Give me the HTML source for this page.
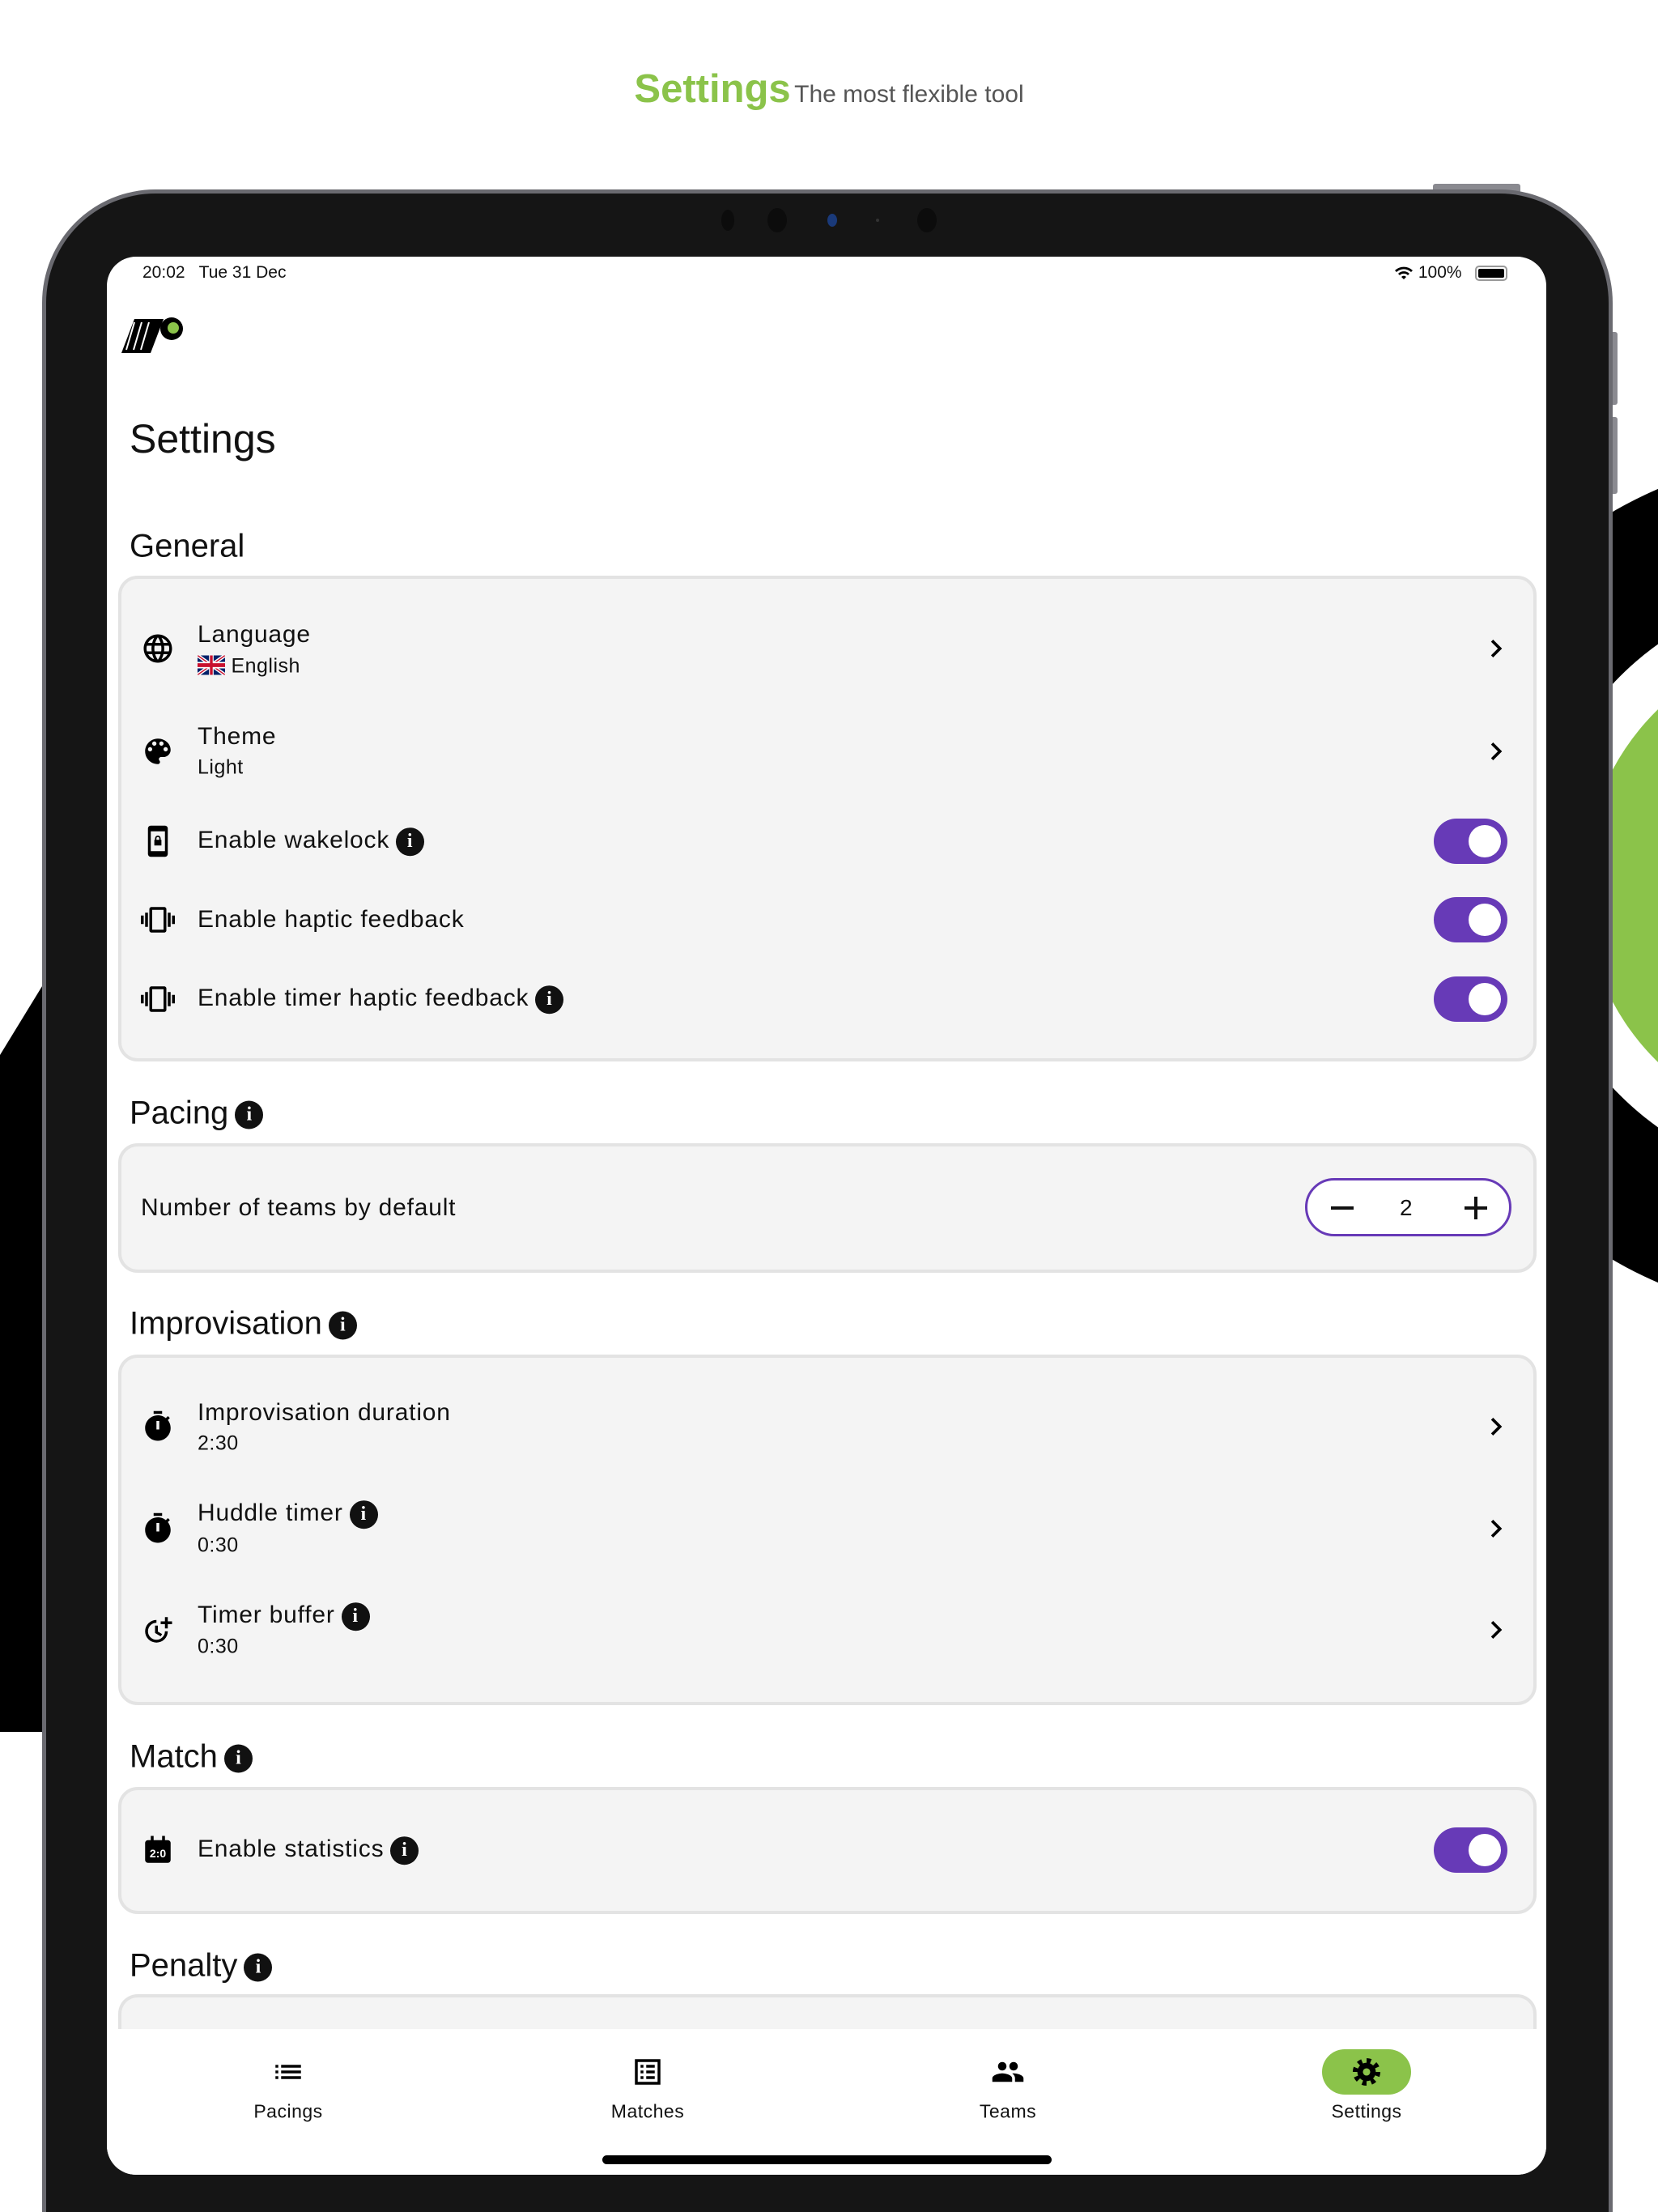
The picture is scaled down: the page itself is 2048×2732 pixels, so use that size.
<!DOCTYPE html>
<html style="overflow:hidden;width:2048px;height:2732px"><head><meta charset="utf-8"><style>
*{margin:0;padding:0;box-sizing:border-box}
body{width:2048px;height:2732px;overflow:hidden;background:#fff;font-family:"Liberation Sans",sans-serif;color:#111}
#w{position:relative;width:2048px;height:2732px;overflow:hidden}
.a{position:absolute}
.t{position:absolute;white-space:nowrap;transform:translateY(-50%)}
.card{position:absolute;left:146px;width:1752px;background:#f4f4f4;border:4px solid #e3e3e3;border-radius:24px}
.h{font-size:40px;left:160px;color:#111}
.rt{font-size:30px;left:244px;letter-spacing:0.8px}
.rs{font-size:25px;left:244px;letter-spacing:0.5px}
.ic{position:absolute;width:42px;height:42px;left:174px;transform:translateY(-50%)}
.chev{position:absolute;left:1826px;width:44px;height:44px;transform:translateY(-50%)}
.tog{position:absolute;left:1771px;width:91px;height:56px;border-radius:28px;background:#673ab7;transform:translateY(-50%)}
.tog::after{content:"";position:absolute;right:8px;top:8px;width:40px;height:40px;border-radius:50%;background:#fff}
.info{display:inline-block;width:35px;height:35px;border-radius:50%;background:#111;color:#fff;font-weight:bold;font-size:24px;line-height:35px;text-align:center;vertical-align:middle;margin-left:8px;font-family:"Liberation Serif",serif}
.nl{position:absolute;top:2608px;font-size:23px;transform:translate(-50%,-50%);letter-spacing:0.5px}
.ni{position:absolute;top:2559px;width:42px;height:42px;transform:translate(-50%,-50%)}
</style></head><body><div id="w">

<svg class="a" style="left:0;top:0" width="2048" height="2732">
<polygon points="0,1303 60,1205 60,2139 0,2139" fill="#000"/>
<circle cx="2260" cy="1094" r="534" fill="#000"/>
<circle cx="2260" cy="1094" r="366" fill="#fff"/>
<circle cx="2260" cy="1094" r="304" fill="#8bc34a"/>
</svg>

<div class="t" style="left:0;width:2048px;text-align:center;top:110px"><span style="color:#8bc34a;font-weight:bold;font-size:49px">Settings</span> <span style="color:#555;font-size:30px">The most flexible tool</span></div>

<div class="a" style="left:1770px;top:227px;width:108px;height:12px;background:#8a8a90;border-radius:3px"></div>
<div class="a" style="left:1988px;top:410px;width:10px;height:90px;background:#8a8a90;border-radius:3px"></div>
<div class="a" style="left:1988px;top:515px;width:10px;height:95px;background:#8a8a90;border-radius:3px"></div>
<div class="a" style="left:52px;top:234px;width:1940px;height:2498px;background:#151515;border:5px solid #6a6a70;border-bottom:none;border-radius:140px 140px 0 0"></div>
<div class="a" style="left:891px;top:259px;width:16px;height:26px;border-radius:50%;background:#0c0c0c"></div>
<div class="a" style="left:948px;top:257px;width:24px;height:30px;border-radius:50%;background:#0c0c0c"></div>
<div class="a" style="left:1022px;top:264px;width:12px;height:16px;border-radius:50%;background:#1a3a7a"></div>
<div class="a" style="left:1082px;top:270px;width:4px;height:4px;border-radius:50%;background:#333"></div>
<div class="a" style="left:1133px;top:257px;width:24px;height:30px;border-radius:50%;background:#0c0c0c"></div>

<div class="a" style="left:132px;top:317px;width:1778px;height:2369px;background:#fff;border-radius:36px"></div>

<div class="t" style="left:176px;top:337px;font-size:21px">20:02&nbsp;&nbsp; Tue 31 Dec</div>
<div class="t" style="left:1722px;top:337px;font-size:21px">
<svg width="24" height="20" viewBox="0 0 24 20" style="vertical-align:middle"><path d="M12 18l3-3a4 4 0 0 0-6 0zM5 11a10 10 0 0 1 14 0l-2 2a7 7 0 0 0-10 0zM1 7a16 16 0 0 1 22 0l-2 2a13 13 0 0 0-18 0z" fill="#000"/></svg> 100%</div>
<div class="a" style="left:1822px;top:328px;width:40px;height:19px;border:2px solid #999;border-radius:5px;padding:2px"><div style="width:100%;height:100%;background:#000;border-radius:2px"></div></div>

<svg class="a" style="left:148px;top:390px" width="82" height="50" viewBox="0 0 82 50">
<polygon points="18,4 54,4 38,46 2,46" fill="#000"/>
<line x1="18" y1="8" x2="8" y2="42" stroke="#fff" stroke-width="2"/>
<line x1="27" y1="8" x2="17" y2="42" stroke="#fff" stroke-width="2"/>
<line x1="36" y1="8" x2="26" y2="42" stroke="#fff" stroke-width="2"/>
<circle cx="64" cy="16" r="14" fill="#000"/><circle cx="66" cy="15" r="7" fill="#8bc34a"/>
</svg>

<div class="t" style="left:160px;top:542px;font-size:50px">Settings</div>

<div class="t h" style="top:675px">General</div>
<div class="card" style="top:711px;height:600px"></div>

<svg class="ic" style="top:801px" viewBox="0 0 24 24"><path d="M11.99 2C6.47 2 2 6.48 2 12s4.47 10 9.99 10C17.52 22 22 17.52 22 12S17.52 2 11.99 2zm6.93 6h-2.95c-.32-1.25-.78-2.45-1.38-3.56 1.84.63 3.37 1.91 4.330 3.56zM12 4.04c.83 1.2 1.48 2.53 1.91 3.96h-3.82c.43-1.43 1.08-2.76 1.91-3.96zM4.26 14C4.1 13.36 4 12.69 4 12s.1-1.36.26-2h3.38c-.08.66-.14 1.320-.14 2s.06 1.34.14 2H4.26zm.82 2h2.95c.32 1.25.78 2.45 1.38 3.56-1.84-.63-3.37-1.9-4.33-3.56zm2.95-8H5.08c.96-1.66 2.49-2.93 4.330-3.56C8.81 5.55 8.35 6.75 8.03 8zM12 19.96c-.83-1.2-1.48-2.53-1.91-3.96h3.82c-.43 1.43-1.08 2.76-1.91 3.96zM14.34 14H9.66c-.09-.66-.16-1.32-.16-2s.07-1.35.16-2h4.68c.09.65.16 1.32.16 2s-.07 1.340-.16 2zm.25 5.56c.6-1.11 1.06-2.31 1.38-3.56h2.950c-.96 1.65-2.49 2.93-4.33 3.56zM16.36 14c.08-.66.14-1.32.14-2s-.06-1.34-.14-2h3.38c.16.64.26 1.31.26 2s-.1 1.36-.26 2h-3.38z"/></svg>
<div class="t rt" style="top:784px">Language</div>
<div class="t rs" style="top:823px"><svg width="34" height="24" viewBox="0 0 60 30" style="vertical-align:-3px" preserveAspectRatio="none"><rect width="60" height="30" fill="#012169"/><path d="M0 0L60 30M60 0L0 30" stroke="#fff" stroke-width="6"/><path d="M0 0L60 30M60 0L0 30" stroke="#c8102e" stroke-width="2"/><path d="M30 0v30M0 15h60" stroke="#fff" stroke-width="10"/><path d="M30 0v30M0 15h60" stroke="#c8102e" stroke-width="6"/></svg> English</div>
<svg class="chev" style="top:801px" viewBox="0 0 24 24"><path d="M8.6 16.6L13.2 12 8.6 7.4 10 6l6 6-6 6z"/></svg>

<svg class="ic" style="top:928px" viewBox="0 0 24 24"><path fill-rule="evenodd" d="M12 3c-4.97 0-9 4.03-9 9s4.03 9 9 9c.83 0 1.5-.67 1.5-1.5 0-.39-.15-.74-.39-1.01-.23-.26-.38-.61-.38-.99 0-.83.67-1.5 1.5-1.5H16c2.76 0 5-2.24 5-5 0-4.42-4.03-8-9-8zm-5.5 9c-.83 0-1.5-.67-1.5-1.5S5.67 9 6.5 9 8 9.67 8 10.5 7.33 12 6.5 12zm3-4C8.67 8 8 7.33 8 6.5S8.67 5 9.5 5s1.5.67 1.5 1.5S10.33 8 9.5 8zm5 0c-.83 0-1.5-.67-1.5-1.5S13.67 5 14.5 5s1.5.67 1.5 1.5S15.33 8 14.5 8zm3 4c-.83 0-1.5-.67-1.5-1.5S16.67 9 17.5 9s1.5.67 1.5 1.5-.67 1.5-1.5 1.5z"/></svg>
<div class="t rt" style="top:910px">Theme</div>
<div class="t rs" style="top:948px">Light</div>
<svg class="chev" style="top:928px" viewBox="0 0 24 24"><path d="M8.6 16.6L13.2 12 8.6 7.4 10 6l6 6-6 6z"/></svg>

<svg class="ic" style="top:1039px" viewBox="0 0 24 24"><path fill-rule="evenodd" d="M7 1h10a2 2 0 0 1 2 2v18a2 2 0 0 1-2 2H7a2 2 0 0 1-2-2V3a2 2 0 0 1 2-2zM7 5v14h10V5z"/><path d="M10 11v-1a2 2 0 0 1 4 0v1h.5v4h-5v-4zm1 0h2v-1a1 1 0 0 0-2 0z"/></svg>
<div class="t rt" style="top:1039px">Enable wakelock<span class="info">i</span></div>
<div class="tog" style="top:1039px"></div>

<svg class="ic" style="top:1136px" viewBox="0 0 24 24"><path d="M0 15h2V9H0v6zm3 2h2V7H3v10zm19-8v6h2V9h-2zm-3 8h2V7h-2v10zM16.5 3h-9C6.67 3 6 3.67 6 4.5v15c0 .83.67 1.5 1.5 1.5h9c.83 0 1.5-.67 1.5-1.5v-15c0-.83-.67-1.5-1.5-1.5zM16 19H8V5h8v14z"/></svg>
<div class="t rt" style="top:1136px">Enable haptic feedback</div>
<div class="tog" style="top:1136px"></div>

<svg class="ic" style="top:1234px" viewBox="0 0 24 24"><path d="M0 15h2V9H0v6zm3 2h2V7H3v10zm19-8v6h2V9h-2zm-3 8h2V7h-2v10zM16.5 3h-9C6.67 3 6 3.67 6 4.5v15c0 .83.67 1.5 1.5 1.5h9c.83 0 1.5-.67 1.5-1.5v-15c0-.83-.67-1.5-1.5-1.5zM16 19H8V5h8v14z"/></svg>
<div class="t rt" style="top:1234px">Enable timer haptic feedback<span class="info">i</span></div>
<div class="tog" style="top:1234px"></div>

<div class="t h" style="top:1375px">Pacing<span class="info">i</span></div>
<div class="card" style="top:1412px;height:160px"></div>
<div class="t rt" style="left:174px;top:1492px">Number of teams by default</div>
<div class="a" style="left:1612px;top:1455px;width:255px;height:72px;border:3px solid #673ab7;border-radius:36px;background:#fff"></div>
<div class="a" style="left:1644px;top:1490px;width:28px;height:4px;background:#111"></div>
<div class="t" style="left:1729px;top:1492px;font-size:28px">2</div>
<div class="a" style="left:1809px;top:1490px;width:28px;height:4px;background:#111"></div>
<div class="a" style="left:1821px;top:1478px;width:4px;height:28px;background:#111"></div>

<div class="t h" style="top:1635px">Improvisation<span class="info">i</span></div>
<div class="card" style="top:1673px;height:433px"></div>

<svg class="ic" style="top:1762px" viewBox="0 0 24 24"><path fill-rule="evenodd" d="M15 1H9v2h6V1zm-4 13h2V8h-2v6zm8.03-6.61l1.42-1.42c-.43-.51-.9-.99-1.41-1.41l-1.42 1.42C16.07 4.74 14.12 4 12 4c-4.97 0-9 4.03-9 9s4.02 9 9 9 9-4.03 9-9c0-2.12-.74-4.07-1.97-5.61z"/></svg>
<div class="t rt" style="top:1745px">Improvisation duration</div>
<div class="t rs" style="top:1783px">2:30</div>
<svg class="chev" style="top:1762px" viewBox="0 0 24 24"><path d="M8.6 16.6L13.2 12 8.6 7.4 10 6l6 6-6 6z"/></svg>

<svg class="ic" style="top:1888px" viewBox="0 0 24 24"><path fill-rule="evenodd" d="M15 1H9v2h6V1zm-4 13h2V8h-2v6zm8.03-6.61l1.42-1.42c-.43-.51-.9-.99-1.41-1.41l-1.42 1.42C16.07 4.74 14.12 4 12 4c-4.97 0-9 4.03-9 9s4.02 9 9 9 9-4.03 9-9c0-2.12-.74-4.07-1.97-5.61z"/></svg>
<div class="t rt" style="top:1870px">Huddle timer<span class="info">i</span></div>
<div class="t rs" style="top:1909px">0:30</div>
<svg class="chev" style="top:1888px" viewBox="0 0 24 24"><path d="M8.6 16.6L13.2 12 8.6 7.4 10 6l6 6-6 6z"/></svg>

<svg class="ic" style="top:2013px" viewBox="0 0 24 24"><path d="M19 3v3h3v2h-3v3h-2V8h-3V6h3V3z"/><path d="M11 5a8 8 0 1 0 8 8h-2a6 6 0 1 1-6-6z"/><path d="M10 9h2v4.2l3 1.8-1 1.6-4-2.4z"/></svg>
<div class="t rt" style="top:1996px">Timer buffer<span class="info">i</span></div>
<div class="t rs" style="top:2034px">0:30</div>
<svg class="chev" style="top:2013px" viewBox="0 0 24 24"><path d="M8.6 16.6L13.2 12 8.6 7.4 10 6l6 6-6 6z"/></svg>

<div class="t h" style="top:2170px">Match<span class="info">i</span></div>
<div class="card" style="top:2207px;height:157px"></div>
<svg class="ic" style="top:2285px" viewBox="0 0 24 24"><rect x="3" y="5" width="18" height="16" rx="2"/><rect x="7" y="2" width="2" height="4"/><rect x="15" y="2" width="2" height="4"/><text x="12" y="17" font-size="8" fill="#fff" text-anchor="middle" font-family="Liberation Sans" font-weight="bold">2:0</text></svg>
<div class="t rt" style="top:2285px">Enable statistics<span class="info">i</span></div>
<div class="tog" style="top:2285px"></div>

<div class="t h" style="top:2428px">Penalty<span class="info">i</span></div>
<div class="card" style="top:2463px;height:120px;border-bottom:none;border-radius:24px 24px 0 0"></div>

<div class="a" style="left:132px;top:2506px;width:1778px;height:180px;background:#fff;border-radius:0 0 36px 36px"></div>
<svg class="ni" style="left:356px" viewBox="0 0 24 24"><path d="M3 13h2v-2H3v2zm0 4h2v-2H3v2zm0-8h2V7H3v2zm4 4h14v-2H7v2zm0 4h14v-2H7v2zM7 7v2h14V7H7z"/></svg>
<svg class="ni" style="left:800px" viewBox="0 0 24 24"><path fill-rule="evenodd" d="M3 3h18v18H3zM5 5v14h14V5z"/><path d="M7 7h2v2H7zm4 0h6v2h-6zM7 11h2v2H7zm4 0h6v2h-6zM7 15h2v2H7zm4 0h6v2h-6z"/></svg>
<svg class="ni" style="left:1245px" viewBox="0 0 24 24"><path d="M16 11c1.66 0 2.99-1.34 2.99-3S17.66 5 16 5c-1.66 0-3 1.34-3 3s1.34 3 3 3zm-8 0c1.66 0 2.99-1.34 2.99-3S9.66 5 8 5C6.34 5 5 6.34 5 8s1.34 3 3 3zm0 2c-2.33 0-7 1.17-7 3.5V19h14v-2.5c0-2.33-4.67-3.5-7-3.5zm8 0c-.29 0-.62.02-.97.05 1.16.84 1.970 1.970 1.970 3.45V19h6v-2.5c0-2.33-4.67-3.5-7-3.5z"/></svg>
<div class="a" style="left:1633px;top:2531px;width:110px;height:56px;border-radius:28px;background:#8bc34a"></div>
<svg class="ni" style="left:1688px" viewBox="0 0 24 24"><circle cx="12" cy="12" r="6.5"/><circle cx="12" cy="12" r="8" fill="none" stroke="#000" stroke-width="3.5" stroke-dasharray="3 3.28"/><circle cx="12" cy="12" r="2.6" fill="#8bc34a"/></svg>
<div class="nl" style="left:356px">Pacings</div>
<div class="nl" style="left:800px">Matches</div>
<div class="nl" style="left:1245px">Teams</div>
<div class="nl" style="left:1688px">Settings</div>
<div class="a" style="left:744px;top:2662px;width:555px;height:11px;border-radius:6px;background:#000"></div>
</div></body></html>
